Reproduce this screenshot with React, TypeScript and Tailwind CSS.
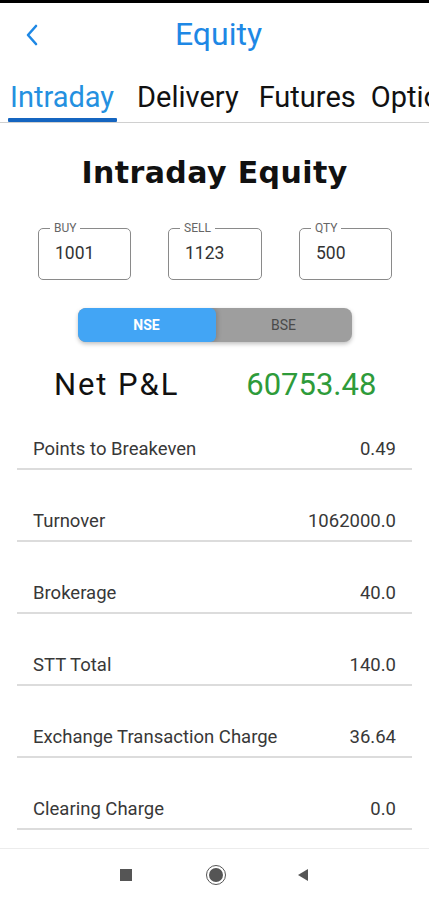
import React from "react";

const rows: [string, string][] = [
  ["Points to Breakeven", "0.49"],
  ["Turnover", "1062000.0"],
  ["Brokerage", "40.0"],
  ["STT Total", "140.0"],
  ["Exchange Transaction Charge", "36.64"],
  ["Clearing Charge", "0.0"],
];

function Field({ label, value, width }: { label: string; value: string; width: string }) {
  return (
    <div className={`relative h-[52px] ${width} rounded-[5px] border border-[#8a8a8a]`}>
      <span className="absolute -top-[8px] left-[11px] bg-white px-[4px] text-[12px] leading-[14px] text-[#666]">
        {label}
      </span>
      <div className="pl-[16px] pt-[13px] text-[17.5px] leading-[22px] text-[#333]">{value}</div>
    </div>
  );
}

export default function App() {
  return (
    <div
      className="relative flex h-[900px] w-[429px] flex-col overflow-hidden bg-white"
      style={{ fontFamily: "Roboto, 'Noto Sans', sans-serif" }}
    >
      <div className="h-[3px] w-full bg-black" />
      {/* header */}
      <div className="relative flex h-[62px] items-center justify-center">
        <svg
          className="absolute left-[22px] top-[19px]"
          width="20"
          height="26"
          viewBox="0 0 20 26"
          fill="none"
          stroke="#1e88e5"
          strokeWidth="2.6"
          strokeLinecap="round"
          strokeLinejoin="round"
        >
          <path d="M14 4 L6 13 L14 22" />
        </svg>
        <span className="ml-[8px] text-[32px] leading-[36px] text-[#1e88e5]">Equity</span>
      </div>
      {/* tabs */}
      <div className="relative flex h-[58px] items-start whitespace-nowrap border-b border-[#d0d0d0] pt-[15px]">
        <div className="relative ml-[10px]">
          <span className="text-[29px] leading-[34px] text-[#2490e0]">Intraday</span>
          <div className="absolute -left-[2px] -right-[3px] top-[38px] h-[4px] rounded-[1px] bg-[#1565c0]" />
        </div>
        <span className="ml-[23px] text-[29px] leading-[34px] text-[#111]">Delivery</span>
        <span className="ml-[20px] text-[29px] leading-[34px] text-[#111]">Futures</span>
        <span className="ml-[15px] text-[29px] leading-[34px] text-[#111]">Options</span>
      </div>
      {/* title */}
      <div className="mt-[30px] flex justify-center">
        <span
          className="text-[30px] leading-[40px] font-bold tracking-[0.4px] text-[#111]"
          style={{ fontFamily: "'DejaVu Sans', sans-serif" }}
        >
          Intraday Equity
        </span>
      </div>
      {/* inputs */}
      <div className="mt-[35px] flex pl-[38px]">
        <Field label="BUY" value="1001" width="w-[93px]" />
        <div className="w-[37px]" />
        <Field label="SELL" value="1123" width="w-[94px]" />
        <div className="w-[37px]" />
        <Field label="QTY" value="500" width="w-[93px]" />
      </div>
      {/* toggle */}
      <div className="mt-[28px] flex justify-center">
        <div className="flex h-[34px] w-[274px] overflow-hidden rounded-[8px] bg-[#9e9e9e] shadow-[0_2px_4px_rgba(0,0,0,0.25)]">
          <div className="flex w-[138px] items-center justify-center rounded-[6px] bg-[#42a5f5] text-[14px] font-bold text-white shadow-[2px_0_4px_rgba(0,0,0,0.15)]">
            NSE
          </div>
          <div className="flex flex-1 items-center justify-center text-[14px] text-[#4a4a4a]">BSE</div>
        </div>
      </div>
      {/* net p&l */}
      <div className="mt-[25px] flex h-[36px] items-center">
        <span className="ml-[54px] text-[31px] leading-[36px] tracking-[1.9px] text-[#111]">Net P&amp;L</span>
        <span className="ml-[67px] text-[31px] leading-[36px] text-[#2e9b3a]">60753.48</span>
      </div>
      {/* rows */}
      <div className="mt-[36px] flex flex-col gap-[41px] px-[17px]">
        {rows.map(([l, v]) => (
          <div key={l} className="flex flex-col">
            <div className="flex h-[20px] items-center justify-between px-[16px] text-[18.5px] leading-[20px] text-[#383838]">
              <span>{l}</span>
              <span>{v}</span>
            </div>
            <div className="mt-[9px] h-[2px] w-full bg-[#dcdcdc]" />
          </div>
        ))}
      </div>
      {/* nav bar */}
      <div className="absolute bottom-0 left-0 right-0 flex h-[52px] items-center justify-center border-t border-[#ececec] bg-white">
        <div className="flex items-center">
          <div className="h-[12px] w-[12px] bg-[#555]" />
          <div className="ml-[74px] flex h-[20px] w-[20px] items-center justify-center rounded-full border-[1.5px] border-[#555]">
            <div className="h-[14px] w-[14px] rounded-full bg-[#555]" />
          </div>
          <svg className="ml-[71px]" width="12" height="14" viewBox="0 0 12 14">
            <path d="M11 1 L1 7 L11 13 Z" fill="#555" />
          </svg>
        </div>
      </div>
    </div>
  );
}
